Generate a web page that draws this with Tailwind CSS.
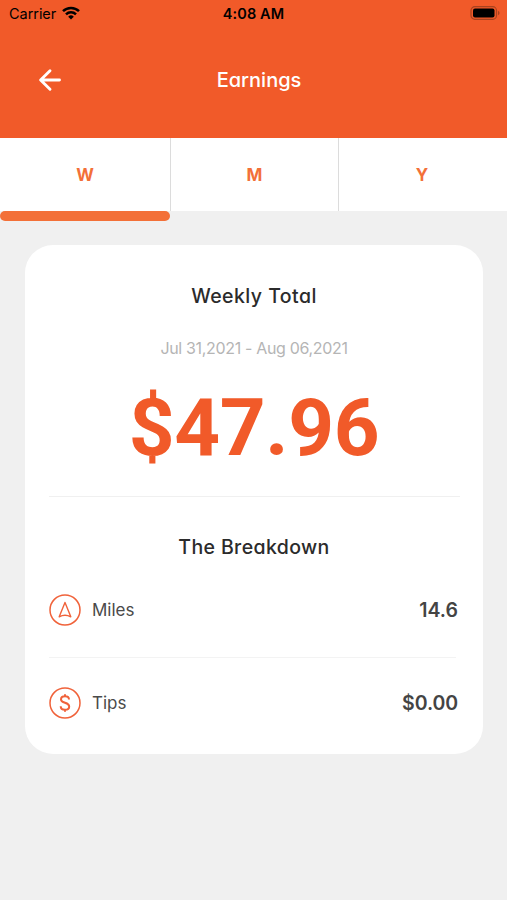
<!DOCTYPE html>
<html lang="en">
<head>
    <meta charset="UTF-8">
    <meta name="viewport" content="width=device-width, initial-scale=1.0">
    <title>Earnings</title>
    <script src="https://cdn.jsdelivr.net/npm/@tailwindcss/browser@4"></script>
</head>
<body class="bg-[#f0f0f0] min-h-screen font-[Inter,sans-serif] [font-feature-settings:'cv11'] whitespace-nowrap">
    <!-- Header -->
    <header class="bg-[#f15a29] h-[138px]">
        <div class="grid grid-cols-3 items-center h-7 pl-[9px] pr-[7px] text-black [font-feature-settings:normal]">
            <div class="flex items-center gap-1.5">
                <span class="text-[14.5px] leading-7 tracking-[-0.05px]">Carrier</span>
                <svg class="w-[18px] h-[14px] -mt-0.5" viewBox="0 0 18 14" fill="none" stroke="currentColor" stroke-width="2.5">
                    <path d="M1 5.2a11.3 11.3 0 0 1 16 0"/>
                    <path d="M4 8.4a7.1 7.1 0 0 1 10 0"/>
                    <path d="M9 13.6 6.2 10.7a4 4 0 0 1 5.6 0z" fill="currentColor" stroke="none"/>
                </svg>
            </div>
            <span class="pr-[2px] text-center text-[14.5px] leading-7 font-semibold tracking-[0.1px]">4:08 AM</span>
            <svg class="w-[30px] h-[14px] justify-self-end -mt-0.5" viewBox="0 0 30 14">
                <rect x="1" y="0.7" width="25.5" height="12.6" rx="3.8" fill="none" stroke="#a8421f" stroke-width="1.2"/>
                <rect x="3" y="2.5" width="21.5" height="9" rx="2" fill="#000"/>
                <path d="M28 4.8q1.6.7 1.6 2.2T28 9.2z" fill="#a8421f"/>
            </svg>
        </div>
        <div class="grid grid-cols-[48px_1fr] items-center mt-8 h-10 pl-[38px] pr-[76px]">
            <button aria-label="Back">
                <svg class="w-6 h-6" viewBox="0 0 24 24" fill="none" stroke="#fff" stroke-width="2.9" stroke-linecap="round" stroke-linejoin="round">
                    <path d="M12 2.8 2.6 12l9.4 9.2M3 12h18.5"/>
                </svg>
            </button>
            <h1 class="pl-[1px] text-center text-white text-[20px] font-medium">Earnings</h1>
        </div>
    </header>

    <!-- Period tabs -->
    <nav class="grid grid-cols-[171px_168px_168px] h-[73px] bg-white text-[#f37038] text-[17px] font-bold">
        <button class="border-r border-[#dcdcdc] pt-0.5">W</button>
        <button class="border-r border-[#dcdcdc] pt-0.5">M</button>
        <button class="pt-0.5 pr-[2px]">Y</button>
    </nav>
    <div class="w-[170px] h-[10px] rounded-full bg-[#f37038]"></div>

    <!-- Earnings card -->
    <main class="mt-6 ml-[25px] w-[458px] h-[509px] rounded-[28px] bg-white px-6 pt-[35px]">
        <h2 class="text-center text-[19.5px] leading-8 font-medium tracking-[0.45px] text-[#2b2b2b]">Weekly Total</h2>
        <p class="mt-[24px] text-center text-[16px] leading-6 tracking-[-0.33px] text-[#b5b5b5]">Jul 31,2021 - Aug 06,2021</p>
        <p class="mt-[22px] text-center font-[Roboto,sans-serif] text-[80px] leading-[92px] font-bold tracking-[-0.4px] text-[#f15a29]">$47.96</p>
        <hr class="mt-[22px] mr-[-1px] border-[#f0f0f0]">

        <h2 class="mt-[34px] text-center text-[19.5px] leading-8 font-medium tracking-[0.38px] text-[#2b2b2b]">The Breakdown</h2>
        <div class="mt-[26px] mr-[1px] h-[42px] flex items-center">
            <svg class="w-8 h-8" viewBox="0 0 32 32" fill="none" stroke="#f0623a" stroke-width="1.5">
                <circle cx="16" cy="16" r="15"/>
                <path d="M16 8.5 10.2 22.8Q16 19.8 21.8 22.8z" stroke-width="1.4" stroke-linejoin="round"/>
            </svg>
            <span class="ml-[11px] pt-0.5 text-[17px] text-[#4a4a4a]">Miles</span>
            <span class="ml-auto pt-0.5 text-[19.5px] font-semibold text-[#444]">14.6</span>
        </div>
        <hr class="mt-[26px] mr-[3px] border-[#f3f3f3]">
        <div class="mt-[24px] mr-[1px] h-[42px] flex items-center">
            <svg class="w-8 h-8" viewBox="0 0 32 32" fill="none" stroke="#f0623a" stroke-width="1.5">
                <circle cx="16" cy="16" r="15"/>
                <path d="M20 12.6c0-2-1.6-3.3-4-3.3s-4 1.2-4 3.1c0 4.3 8.2 2.5 8.2 7 0 2-1.7 3.4-4.2 3.4s-4.3-1.3-4.3-3.5M16 7.2v2M16 22.8v2" stroke-width="2"/>
            </svg>
            <span class="ml-[11px] pt-0.5 text-[17px] text-[#4a4a4a]">Tips</span>
            <span class="ml-auto pt-0.5 text-[19.5px] font-semibold tracking-[-0.1px] text-[#444]">$0.00</span>
        </div>
    </main>
</body>
</html>
